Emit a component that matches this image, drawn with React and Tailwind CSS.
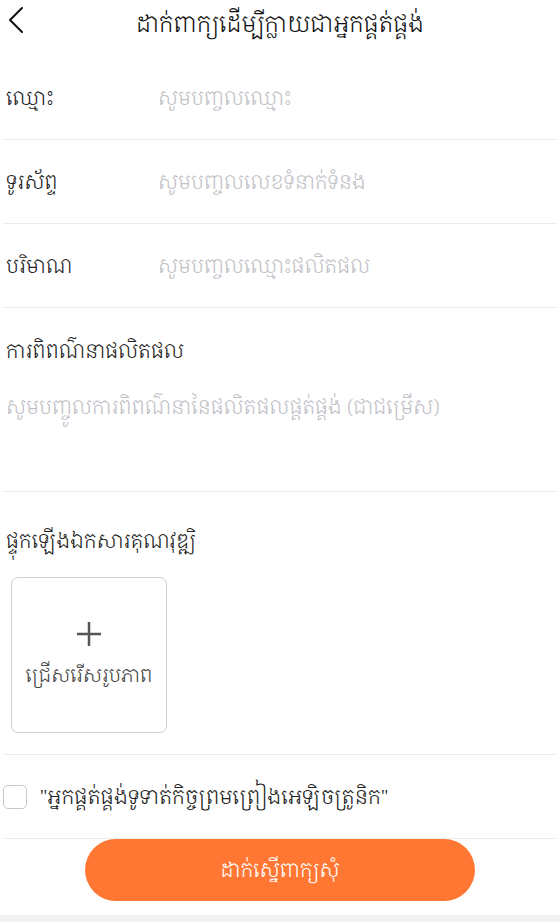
import React, { useState } from "react";

const khmer = {
  fontFamily: '"Noto Serif Khmer", "Noto Sans Khmer", "DejaVu Sans", sans-serif',
};

const Row = ({ label, placeholder }) => (
  <div className="flex items-center h-[84px] border-b border-[#ececec] px-[3px]">
    <span className="w-[152px] shrink-0 text-[20px] font-light text-[#222]">{label}</span>
    <input
      className="flex-1 text-[20px] font-light text-[#222] placeholder:text-[#bfc1c7] outline-none bg-transparent"
      placeholder={placeholder}
    />
  </div>
);

const SupplierApply = () => {
  const [agreed, setAgreed] = useState(false);

  return (
    <div className="w-[560px] h-[922px] bg-white flex flex-col" style={khmer}>
      {/* header */}
      <div className="relative flex items-center justify-center h-[42px]">
        <button className="absolute left-[5px] top-[4px] p-[2px]">
          <svg width="18" height="28" viewBox="0 0 18 28" fill="none">
            <path d="M15 2 L3 14 L15 26" stroke="#111" strokeWidth="2" strokeLinecap="round" strokeLinejoin="round" />
          </svg>
        </button>
        <h1 className="text-[23px] font-light text-[#111] leading-none mt-[4px]">ដាក់ពាក្យដើម្បីក្លាយជាអ្នកផ្គត់ផ្គង់</h1>
      </div>

      <div className="px-[3px] flex-1 flex flex-col">
        <div className="mt-[14px]">
          <Row label="ឈ្មោះ" placeholder="សូមបញ្ចូលឈ្មោះ" />
          <Row label="ទូរស័ព្ទ" placeholder="សូមបញ្ចូលលេខទំនាក់ទំនង" />
          <Row label="បរិមាណ" placeholder="សូមបញ្ចូលឈ្មោះផលិតផល" />
        </div>

        {/* description */}
        <div className="border-b border-[#ececec] px-[3px] pt-[28px] h-[184px]">
          <div className="text-[20px] font-light text-[#222]">ការពិពណ៌នាផលិតផល</div>
          <textarea
            rows={2}
            className="mt-[26px] w-full resize-none text-[20px] font-light text-[#222] placeholder:text-[#bfc1c7] outline-none"
            placeholder="សូមបញ្ចូលការពិពណ៌នានៃផលិតផលផ្គត់ផ្គង់ (ជាជម្រើស)"
          />
        </div>

        {/* upload */}
        <div className="border-b border-[#ececec] px-[3px] pt-[34px] h-[263px]">
          <div className="text-[20px] font-light text-[#222]">ផ្ទុកឡើងឯកសារគុណវុឌ្ឍិ</div>
          <button className="mt-[21px] ml-[5px] w-[156px] h-[156px] rounded-[7px] border border-[#cfcfcf] flex flex-col items-center justify-center gap-[14px]">
            <svg width="26" height="26" viewBox="0 0 26 26">
              <path d="M13 1 V25 M1 13 H25" stroke="#555" strokeWidth="2.5" />
            </svg>
            <span className="text-[19px] font-light text-[#444]">ជ្រើសរើសរូបភាព</span>
          </button>
        </div>

        {/* agreement */}
        <label className="flex items-center gap-[13px] h-[84px] border-b border-[#ececec]">
          <input
            type="checkbox"
            checked={agreed}
            onChange={() => setAgreed(!agreed)}
            className="appearance-none w-[24px] h-[24px] rounded-[5px] border border-[#c8c8c8] shrink-0"
          />
          <span className="text-[20.5px] font-light text-[#222]">"អ្នកផ្គត់ផ្គង់ទូទាត់កិច្ចព្រមព្រៀងអេឡិចត្រូនិក"</span>
        </label>

        <div className="flex justify-center">
          <button className="w-[390px] h-[62px] rounded-full bg-[#ff7733] text-white text-[20px] font-light">
            ដាក់ស្នើពាក្យសុំ
          </button>
        </div>
      </div>

      <div className="h-[7px] bg-[#f2f2f2]" />
    </div>
  );
};

export default SupplierApply;
